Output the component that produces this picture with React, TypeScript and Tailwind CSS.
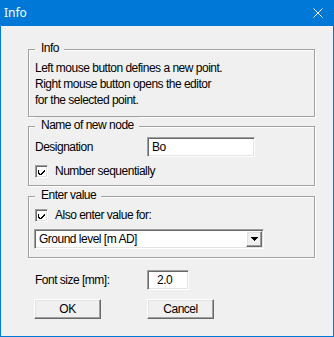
import React from "react";

function Check() {
  return (
    <span className="w-[13px] h-[13px] shrink-0 bg-white border border-t-[#a0a0a0] border-l-[#a0a0a0] border-b-white border-r-white shadow-[inset_1px_1px_0_#696969,inset_-1px_-1px_0_#e3e3e3] flex items-center justify-center">
      <svg width="7" height="7" viewBox="0 0 7 7" shapeRendering="crispEdges">
        <path d="M0 2h1v3h1v1h1v-1h1v-1h1v-1h1v-1h1v2h-1v1h-1v1h-1v1h-1v1h-1v-1h-1v-1h-1z" fill="#000" />
      </svg>
    </span>
  );
}

function Group({ title, children, className }: { title: string; children: React.ReactNode; className?: string }) {
  return (
    <div
      className={
        "relative w-[287px] border border-[#a0a0a0] shadow-[1px_1px_0_#fff,inset_1px_1px_0_#fff] " +
        (className ?? "")
      }
    >
      <span className="absolute left-[6px] top-[-10px] bg-[#f0f0f0] pl-[6px] pr-[5px] leading-[16px]">{title}</span>
      {children}
    </div>
  );
}

const sunken =
  "bg-white border border-t-[#a0a0a0] border-l-[#a0a0a0] border-b-white border-r-white shadow-[inset_1px_1px_0_#696969,inset_-1px_-1px_0_#e3e3e3]";
const raised =
  "bg-[#f0f0f0] border border-t-white border-l-white border-b-[#696969] border-r-[#696969] shadow-[inset_-1px_-1px_0_#a0a0a0,inset_1px_1px_0_#e3e3e3]";

export default function App() {
  return (
    <div className="w-[334px] h-[337px] flex flex-col bg-[#f0f0f0] border-x border-b border-[#0078d7] text-black text-[12px] tracking-[-0.5px] leading-[16px] font-['Liberation_Sans',Arial,sans-serif]">
      <div className="h-[26px] shrink-0 bg-[#0078d7] flex items-center justify-between pl-[3px] pr-[10px] text-white text-[12px] tracking-normal font-['Noto_Sans','Liberation_Sans',sans-serif]">
        <span>Info</span>
        <svg width="10" height="10" viewBox="0 0 10 10">
          <path d="M0.5 0.5L9.5 9.5M9.5 0.5L0.5 9.5" stroke="#fff" strokeWidth="1" />
        </svg>
      </div>

      <div className="pl-[27px] flex flex-col">
        <Group title="Info" className="mt-[23px] pt-[10px] pb-[8px] pl-[6px]">
          <div>Left mouse button defines a new point.</div>
          <div>Right mouse button opens the editor</div>
          <div>for the selected point.</div>
        </Group>

        <Group title="Name of new node" className="mt-[9px] pt-[10px] pb-[6px] pl-[6px]">
          <div className="flex items-center h-[20px]">
            <span className="w-[112px]">Designation</span>
            <div className={"w-[108px] h-[20px] flex items-center pl-[4px] " + sunken}>Bo</div>
          </div>
          <div className="flex items-center h-[16px] mt-[6px]">
            <Check />
            <span className="ml-[7px]">Number sequentially</span>
          </div>
        </Group>

        <Group title="Enter value" className="mt-[10px] pt-[10px] pb-[8px] pl-[6px]">
          <div className="flex items-center h-[16px]">
            <Check />
            <span className="ml-[7px]">Also enter value for:</span>
          </div>
          <div className={"mt-[6px] -ml-px w-[230px] h-[20px] flex items-center justify-between pl-[4px] pr-px " + sunken}>
            <span>Ground level [m AD]</span>
            <div className={"w-[16px] h-[16px] flex items-center justify-center " + raised}>
              <svg width="7" height="4" viewBox="0 0 7 4" shapeRendering="crispEdges">
                <path d="M0 0h7v1h-1v1h-1v1h-1v1h-1v-1h-1v-1h-1v-1h-1z" fill="#000" />
              </svg>
            </div>
          </div>
        </Group>

        <div className="mt-[12px] ml-[7px] flex items-center h-[20px]">
          <span className="w-[112px]">Font size [mm]:</span>
          <div className={"w-[42px] h-[20px] flex items-center pl-[9px] " + sunken}>2.0</div>
        </div>

        <div className="mt-[9px] ml-[6px] flex items-center">
          <button className={"w-[67px] h-[20px] flex items-center justify-center " + raised}>OK</button>
          <button className={"ml-[46px] w-[67px] h-[20px] flex items-center justify-center " + raised}>Cancel</button>
        </div>
      </div>
    </div>
  );
}
